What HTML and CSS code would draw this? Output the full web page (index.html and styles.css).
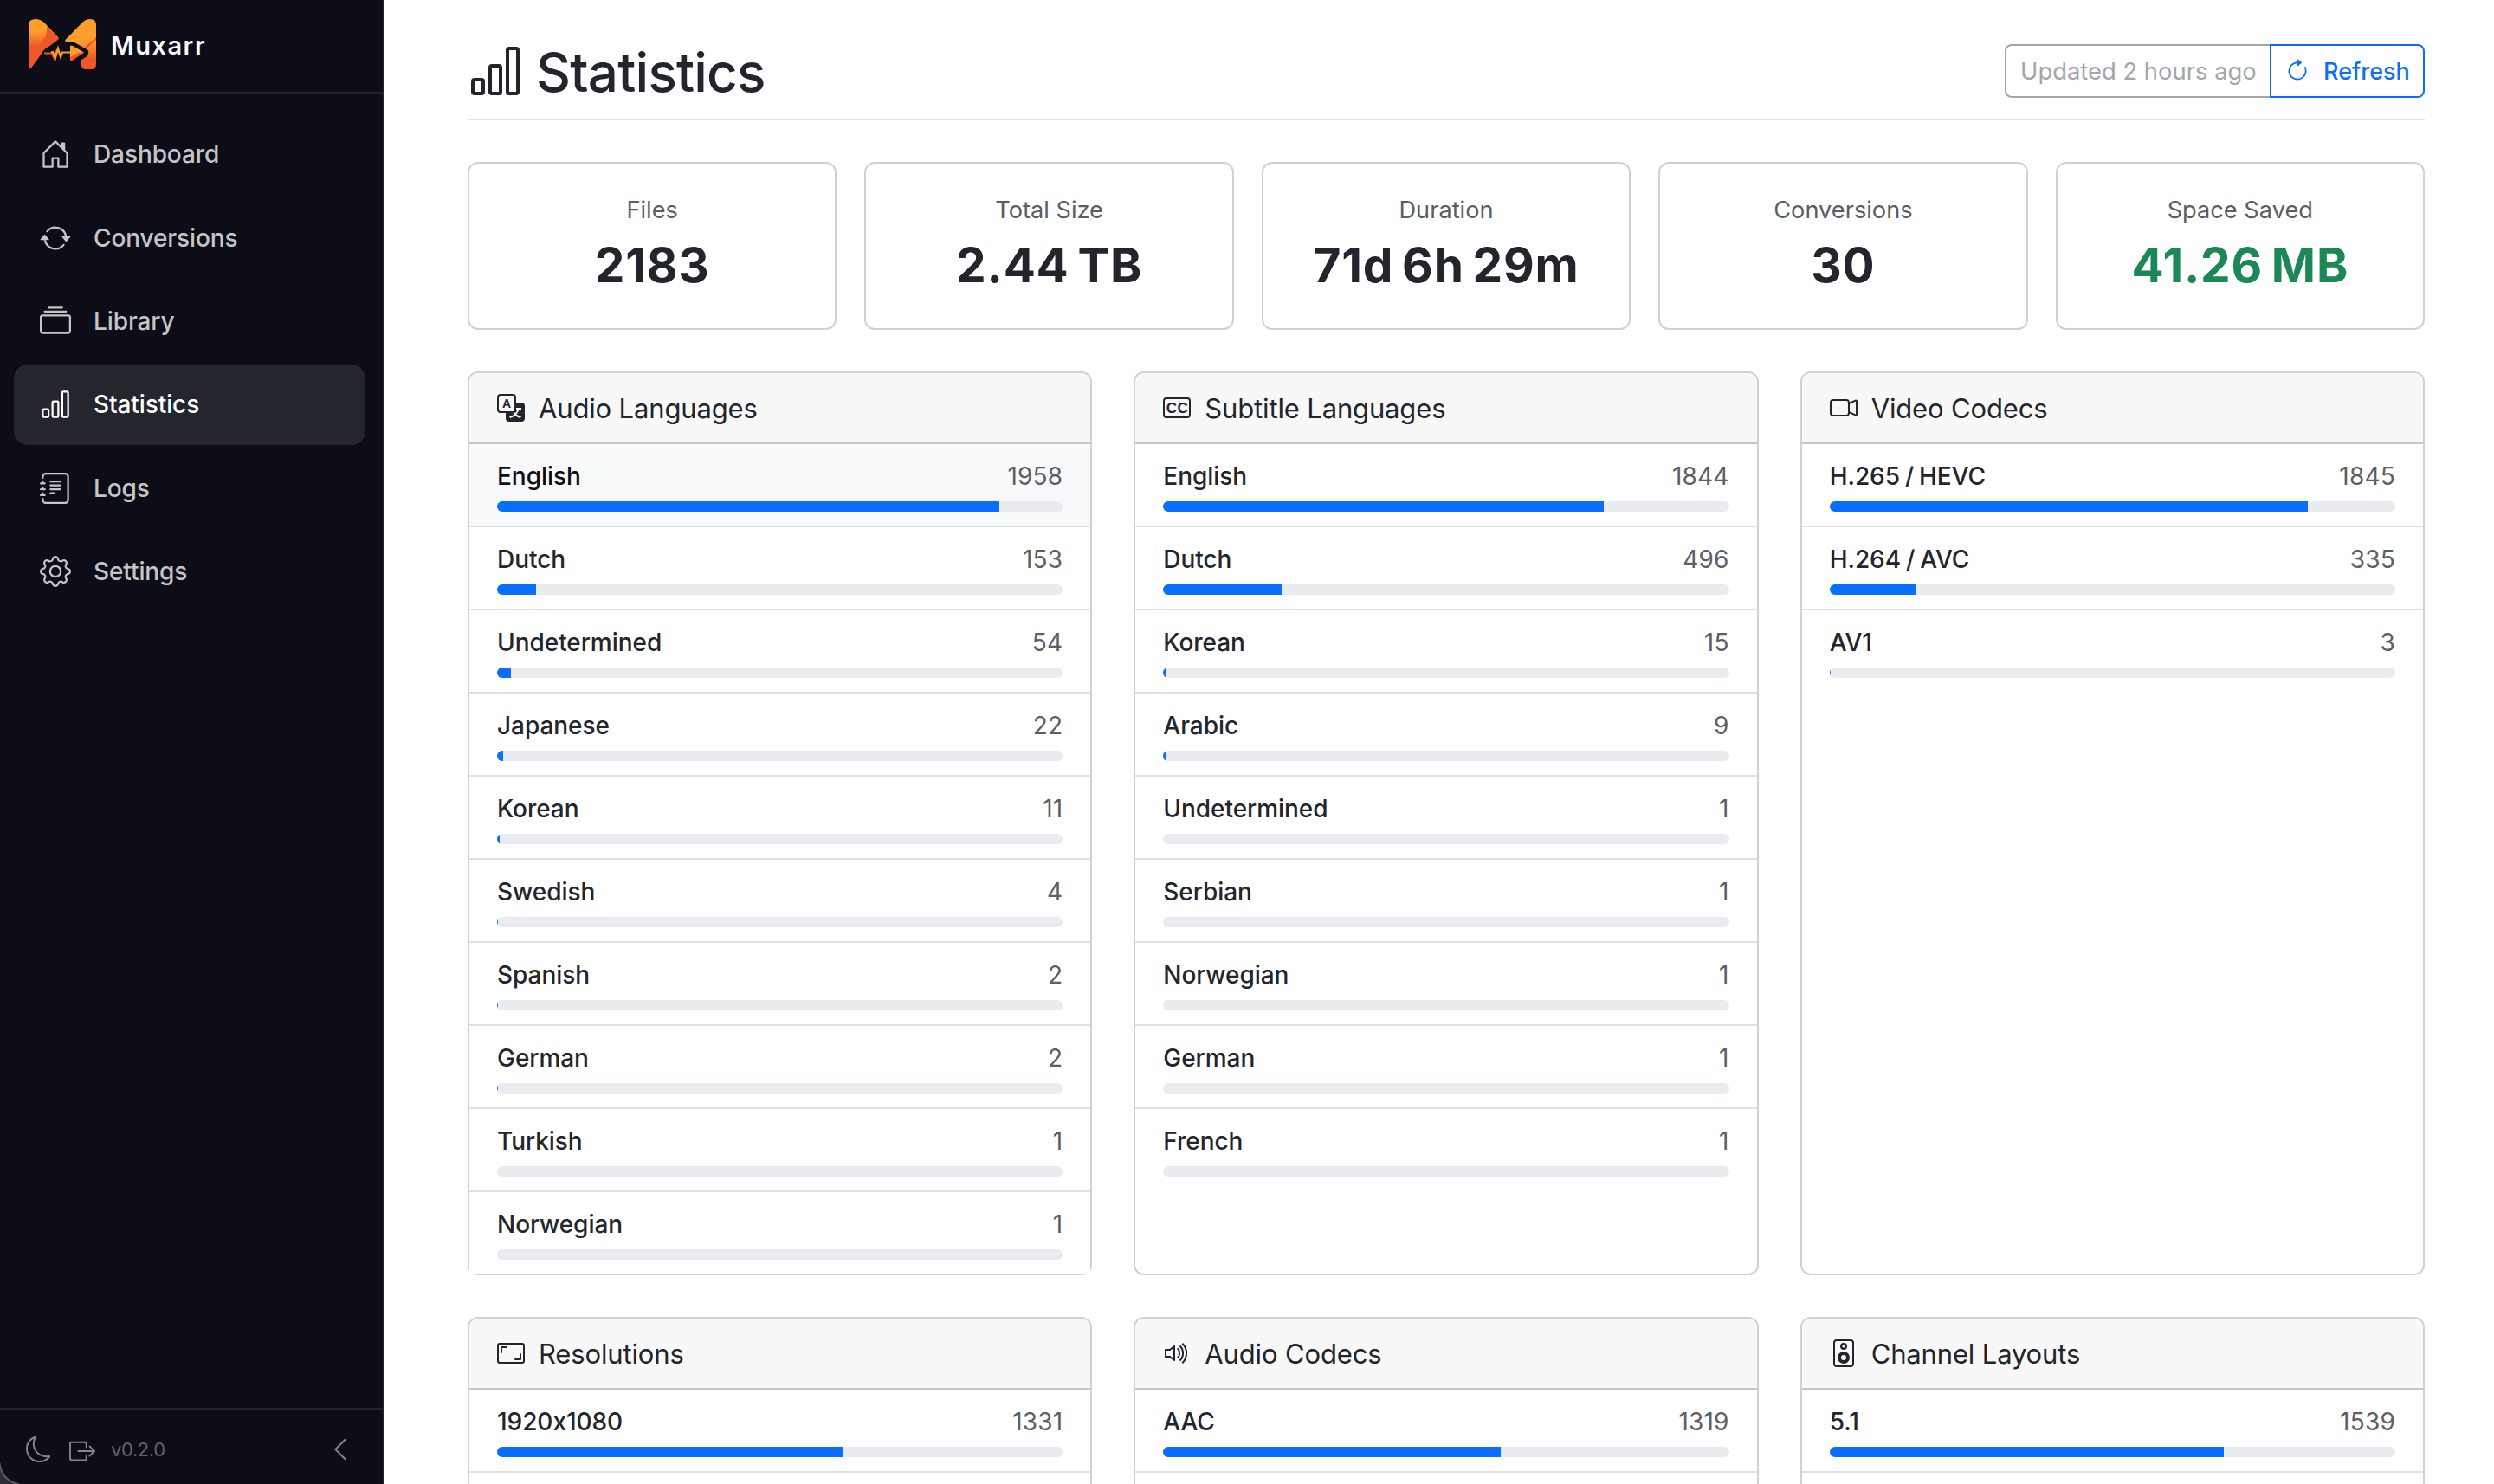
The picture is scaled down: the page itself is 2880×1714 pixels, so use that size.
FILE: index.html
```html
<!DOCTYPE html>
<html lang="en">
<head>
	<meta charset="utf-8">
	<title>Statistics - Muxarr</title>
	<link rel="stylesheet" href="styles.css">
</head>

<body>

<div class="sidebar">
	<div class="brand">
		<svg class="logo" viewBox="33 22 78 58">
			<defs>
				<linearGradient id="wing-left" x1="0" y1="0" x2="0" y2="1">
					<stop offset="0.25" stop-color="#fd9d2c"/>
					<stop offset="0.55" stop-color="#ef572a"/>
				</linearGradient>
				<linearGradient id="wing-right" x1="0" y1="0" x2="0" y2="1">
					<stop offset="0.45" stop-color="#fd9d2c"/>
					<stop offset="0.8" stop-color="#ef572a"/>
				</linearGradient>
			</defs>
			<path fill="url(#wing-left)" d="M33 29Q33 22 41 22Q47 22 52 27L67.500 43.500Q68 44.500 67 45.500L58 52.500Q50 57 48 62L36 78.500Q33 81 33 77Z"/>
			<path fill="#ef572a" d="M54 30L67.500 43.500Q68 44.500 67 45.500L58 52.500Q50 57 47 60Q43 52 50 46Q55 40 54 30Z"/>
			<path fill="url(#wing-right)" d="M75 46.500L95 26Q99 22 104 22Q111 22 111 29V74Q111 80 105 80H99Q94 80 94 75V69L100 65.500Q104 61 101 57.500L85 48.500Q82 47.500 76 48.500Z"/>
			<path fill="#ef572a" d="M98 54.500L111 43V46L100 56Z"/>
			<path fill="none" stroke="#ef572a" stroke-width="2.200" d="M51 61.500H60L63 68L66 57"/>
			<path fill="none" stroke="#fd9d2c" stroke-width="2.200" d="M59 60.500L61 60L64 67L67 56L70 66L72 60.500H82"/>
			<path fill="#fd9d2c" d="M81 53Q82 52 84 53L97 60.500L83 70Q81 70 81 68Z"/>
			<path fill="#ef572a" d="M97 60.500L83 70Q81 70 81 66L90 61Z"/>
		</svg>
		<span class="brand-name">Muxarr</span>
	</div>

	<ul class="nav">
		<li class="nav-item">
			<svg class="icon" viewBox="0 0 16 16"><path d="M8.354 1.146a.5.5 0 0 0-.708 0l-6 6A.5.5 0 0 0 1.500 7.500v7a.5.5 0 0 0 .5.5h4.500a.5.5 0 0 0 .5-.5v-4h2v4a.5.5 0 0 0 .5.5H14a.5.5 0 0 0 .5-.5v-7a.5.5 0 0 0-.146-.354L13 5.793V2.500a.5.5 0 0 0-.5-.5h-1a.5.5 0 0 0-.5.5v1.293zM2.500 14V7.707l5.500-5.500 5.500 5.500V14H10v-4a.5.5 0 0 0-.5-.5h-3a.5.5 0 0 0-.5.5v4z"/></svg>
			<span>Dashboard</span>
		</li>
		<li class="nav-item">
			<svg class="icon" viewBox="0 0 16 16"><path d="M11.534 7h3.932a.25.25 0 0 1 .192.41l-1.966 2.360a.25.25 0 0 1-.384 0l-1.966-2.360a.25.25 0 0 1 .192-.41m-11 2h3.932a.25.25 0 0 0 .192-.41L2.692 6.230a.25.25 0 0 0-.384 0L.342 8.590A.25.25 0 0 0 .534 9"/><path d="M8 3c-1.552 0-2.940.707-3.857 1.818a.5.5 0 1 1-.771-.636A6.002 6.002 0 0 1 13.917 7H12.900A5 5 0 0 0 8 3M3.100 9a5.002 5.002 0 0 0 8.757 2.182.5.5 0 1 1 .771.636A6.002 6.002 0 0 1 2.083 9z"/></svg>
			<span>Conversions</span>
		</li>
		<li class="nav-item">
			<svg class="icon" viewBox="0 0 16 16"><path d="M2.500 3.500a.5.5 0 0 1 0-1h11a.5.5 0 0 1 0 1zm2-2a.5.5 0 0 1 0-1h7a.5.5 0 0 1 0 1zM0 13a1.500 1.500 0 0 0 1.500 1.500h13A1.500 1.500 0 0 0 16 13V6a1.500 1.500 0 0 0-1.500-1.500h-13A1.500 1.500 0 0 0 0 6zm1.500.5A.5.5 0 0 1 1 13V6a.5.5 0 0 1 .5-.5h13a.5.5 0 0 1 .5.5v7a.5.5 0 0 1-.5.5z"/></svg>
			<span>Library</span>
		</li>
		<li class="nav-item active">
			<svg class="icon" viewBox="0 0 16 16"><path d="M4 11H2v3h2zm5-4H7v7h2zm5-5v12h-2V2zm-2-1a1 1 0 0 0-1 1v12a1 1 0 0 0 1 1h2a1 1 0 0 0 1-1V2a1 1 0 0 0-1-1zM6 7a1 1 0 0 1 1-1h2a1 1 0 0 1 1 1v7a1 1 0 0 1-1 1H7a1 1 0 0 1-1-1zm-5 4a1 1 0 0 1 1-1h2a1 1 0 0 1 1 1v3a1 1 0 0 1-1 1H2a1 1 0 0 1-1-1z"/></svg>
			<span>Statistics</span>
		</li>
		<li class="nav-item">
			<svg class="icon" viewBox="0 0 16 16"><path d="M5 10.500a.5.5 0 0 1 .5-.5h2a.5.5 0 0 1 0 1h-2a.5.5 0 0 1-.5-.5m0-2a.5.5 0 0 1 .5-.5h5a.5.5 0 0 1 0 1h-5a.5.5 0 0 1-.5-.5m0-2a.5.5 0 0 1 .5-.5h5a.5.5 0 0 1 0 1h-5a.5.5 0 0 1-.5-.5m0-2a.5.5 0 0 1 .5-.5h5a.5.5 0 0 1 0 1h-5a.5.5 0 0 1-.5-.5"/><path d="M3 0h10a2 2 0 0 1 2 2v12a2 2 0 0 1-2 2H3a2 2 0 0 1-2-2v-1h1v1a1 1 0 0 0 1 1h10a1 1 0 0 0 1-1V2a1 1 0 0 0-1-1H3a1 1 0 0 0-1 1v1H1V2a2 2 0 0 1 2-2"/><path d="M1 5v-.5a.5.5 0 0 1 1 0V5h.5a.5.5 0 0 1 0 1h-2a.5.5 0 0 1 0-1zm0 3v-.5a.5.5 0 0 1 1 0V8h.5a.5.5 0 0 1 0 1h-2a.5.5 0 0 1 0-1zm0 3v-.5a.5.5 0 0 1 1 0v.5h.5a.5.5 0 0 1 0 1h-2a.5.5 0 0 1 0-1z"/></svg>
			<span>Logs</span>
		</li>
		<li class="nav-item">
			<svg class="icon" viewBox="0 0 16 16"><path d="M8 4.754a3.246 3.246 0 1 0 0 6.492 3.246 3.246 0 0 0 0-6.492M5.754 8a2.246 2.246 0 1 1 4.492 0 2.246 2.246 0 0 1-4.492 0"/><path d="M9.796 1.343c-.527-1.790-3.065-1.790-3.592 0l-.094.319a.873.873 0 0 1-1.255.52l-.292-.16c-1.640-.892-3.433.902-2.540 2.541l.159.292a.873.873 0 0 1-.52 1.255l-.319.094c-1.790.527-1.790 3.065 0 3.592l.319.094a.873.873 0 0 1 .52 1.255l-.16.292c-.892 1.640.901 3.434 2.541 2.540l.292-.159a.873.873 0 0 1 1.255.52l.094.319c.527 1.790 3.065 1.790 3.592 0l.094-.319a.873.873 0 0 1 1.255-.52l.292.16c1.640.893 3.434-.902 2.540-2.541l-.159-.292a.873.873 0 0 1 .52-1.255l.319-.094c1.790-.527 1.790-3.065 0-3.592l-.319-.094a.873.873 0 0 1-.52-1.255l.16-.292c.893-1.640-.902-3.433-2.541-2.540l-.292.159a.873.873 0 0 1-1.255-.52zm-2.633.283c.246-.835 1.428-.835 1.674 0l.094.319a1.873 1.873 0 0 0 2.693 1.115l.291-.16c.764-.415 1.600.42 1.184 1.185l-.159.292a1.873 1.873 0 0 0 1.116 2.692l.318.094c.835.246.835 1.428 0 1.674l-.319.094a1.873 1.873 0 0 0-1.115 2.693l.16.291c.415.764-.42 1.600-1.185 1.184l-.291-.159a1.873 1.873 0 0 0-2.693 1.116l-.094.318c-.246.835-1.428.835-1.674 0l-.094-.319a1.873 1.873 0 0 0-2.692-1.115l-.292.16c-.764.415-1.600-.42-1.184-1.185l.159-.291A1.873 1.873 0 0 0 1.945 8.930l-.319-.094c-.835-.246-.835-1.428 0-1.674l.319-.094A1.873 1.873 0 0 0 3.060 4.377l-.16-.292c-.415-.764.42-1.600 1.185-1.184l.292.159a1.873 1.873 0 0 0 2.692-1.115z"/></svg>
			<span>Settings</span>
		</li>
	</ul>

	<div class="sidebar-footer">
		<svg class="icon" viewBox="0 0 16 16"><path d="M6 .278a.77.77 0 0 1 .08.858 7.200 7.200 0 0 0-.878 3.460c0 4.021 3.278 7.277 7.318 7.277q.792-.001 1.533-.16a.79.79 0 0 1 .81.316.73.73 0 0 1-.031.893A8.350 8.350 0 0 1 8.344 16C3.734 16 0 12.286 0 7.710 0 4.266 2.114 1.312 5.124.06A.75.75 0 0 1 6 .278M4.858 1.311A7.270 7.270 0 0 0 1.025 7.710c0 4.020 3.279 7.276 7.319 7.276a7.320 7.320 0 0 0 5.205-2.162q-.506.063-1.029.063c-4.610 0-8.343-3.714-8.343-8.290 0-1.167.242-2.278.681-3.286"/></svg>
		<svg class="icon logout" viewBox="0 0 16 16"><path d="M10 12.500a.5.5 0 0 1-.5.5h-8a.5.5 0 0 1-.5-.5v-9a.5.5 0 0 1 .5-.5h8a.5.5 0 0 1 .5.5v2a.5.5 0 0 0 1 0v-2A1.500 1.500 0 0 0 9.500 2h-8A1.500 1.500 0 0 0 0 3.500v9A1.500 1.500 0 0 0 1.500 14h8a1.500 1.500 0 0 0 1.500-1.500v-2a.5.5 0 0 0-1 0z"/><path d="M15.854 8.354a.5.5 0 0 0 0-.708l-3-3a.5.5 0 0 0-.708.708L14.293 7.500H5.500a.5.5 0 0 0 0 1h8.793l-2.147 2.146a.5.5 0 0 0 .708.708z"/></svg>
		<span class="version">v0.2.0</span>
		<svg class="icon collapse" viewBox="0 0 16 16"><path d="M11.354 1.646a.5.5 0 0 1 0 .708L5.707 8l5.647 5.646a.5.5 0 0 1-.708.708l-6-6a.5.5 0 0 1 0-.708l6-6a.5.5 0 0 1 .708 0"/></svg>
	</div>
	<div class="window-corner"></div>
</div>

<div class="main">
	<div class="page-header">
		<svg class="icon" viewBox="0 0 16 16"><path d="M4 11H2v3h2zm5-4H7v7h2zm5-5v12h-2V2zm-2-1a1 1 0 0 0-1 1v12a1 1 0 0 0 1 1h2a1 1 0 0 0 1-1V2a1 1 0 0 0-1-1zM6 7a1 1 0 0 1 1-1h2a1 1 0 0 1 1 1v7a1 1 0 0 1-1 1H7a1 1 0 0 1-1-1zm-5 4a1 1 0 0 1 1-1h2a1 1 0 0 1 1 1v3a1 1 0 0 1-1 1H2a1 1 0 0 1-1-1z"/></svg>
		<h1>Statistics</h1>
		<div class="btn-group">
			<button class="btn btn-updated" disabled>Updated 2 hours ago</button>
			<button class="btn btn-refresh">
				<svg class="icon" viewBox="0 0 16 16"><path d="M8 3a5 5 0 1 0 4.546 2.914.5.5 0 0 1 .908-.417A6 6 0 1 1 8 2z"/><path d="M8 4.466V.534a.25.25 0 0 1 .41-.192l2.360 1.966c.12.1.12.284 0 .384L8.410 4.658A.25.25 0 0 1 8 4.466"/></svg>
				<span>Refresh</span>
			</button>
		</div>
	</div>

	<div class="totals">
		<div class="total"><div class="label">Files</div><div class="value">2183</div></div>
		<div class="total"><div class="label">Total Size</div><div class="value">2.44 TB</div></div>
		<div class="total"><div class="label">Duration</div><div class="value">71d 6h 29m</div></div>
		<div class="total"><div class="label">Conversions</div><div class="value">30</div></div>
		<div class="total"><div class="label">Space Saved</div><div class="value saved">41.26 MB</div></div>
	</div>

	<div class="cards">
		<div class="card">
			<div class="card-header">
				<svg class="icon" viewBox="0 0 16 16"><path d="M0 2a2 2 0 0 1 2-2h7a2 2 0 0 1 2 2v3h3a2 2 0 0 1 2 2v7a2 2 0 0 1-2 2H7a2 2 0 0 1-2-2v-3H2a2 2 0 0 1-2-2zm2-1a1 1 0 0 0-1 1v7a1 1 0 0 0 1 1h7a1 1 0 0 0 1-1V2a1 1 0 0 0-1-1zm7.138 9.995q.289.451.63.846c-.748.575-1.673 1.001-2.768 1.292.178.217.451.635.555.867 1.125-.359 2.080-.844 2.886-1.494.777.665 1.739 1.165 2.930 1.472.133-.254.414-.673.629-.89-1.125-.253-2.057-.694-2.820-1.284.681-.747 1.222-1.651 1.621-2.757H14V8h-3v1.047h.765c-.318.844-.74 1.546-1.272 2.130a6 6 0 0 1-.415-.492 2 2 0 0 1-.94.31"/><text class="glyph-a" x="5.500" y="8">A</text></svg>
				<span>Audio Languages</span>
			</div>
			<div class="rows" id="audio-languages"></div>
		</div>
		<div class="card">
			<div class="card-header">
				<svg class="icon" viewBox="0 0 16 16"><path d="M14 3a1 1 0 0 1 1 1v8a1 1 0 0 1-1 1H2a1 1 0 0 1-1-1V4a1 1 0 0 1 1-1zM2 2a2 2 0 0 0-2 2v8a2 2 0 0 0 2 2h12a2 2 0 0 0 2-2V4a2 2 0 0 0-2-2z"/><text class="glyph-cc" x="8.200" y="11">CC</text></svg>
				<span>Subtitle Languages</span>
			</div>
			<div class="rows" id="subtitle-languages"></div>
		</div>
		<div class="card">
			<div class="card-header">
				<svg class="icon" viewBox="0 0 16 16"><path fill-rule="evenodd" d="M0 5a2 2 0 0 1 2-2h7.500a2 2 0 0 1 1.983 1.738l3.110-1.382A1 1 0 0 1 16 4.269v7.462a1 1 0 0 1-1.406.913l-3.111-1.382A2 2 0 0 1 9.500 13H2a2 2 0 0 1-2-2zm11.500 5.175 3.500 1.556V4.269l-3.500 1.556zM2 4a1 1 0 0 0-1 1v6a1 1 0 0 0 1 1h7.500a1 1 0 0 0 1-1V5a1 1 0 0 0-1-1z"/></svg>
				<span>Video Codecs</span>
			</div>
			<div class="rows" id="video-codecs"></div>
		</div>
		<div class="card">
			<div class="card-header">
				<svg class="icon" viewBox="0 0 16 16"><path d="M0 3.500A1.500 1.500 0 0 1 1.500 2h13A1.500 1.500 0 0 1 16 3.500v9a1.500 1.500 0 0 1-1.500 1.500h-13A1.500 1.500 0 0 1 0 12.500zM1.500 3a.5.5 0 0 0-.5.5v9a.5.5 0 0 0 .5.5h13a.5.5 0 0 0 .5-.5v-9a.5.5 0 0 0-.5-.5z"/><path d="M2 4.500a.5.5 0 0 1 .5-.5h3a.5.5 0 0 1 0 1H3v2.500a.5.5 0 0 1-1 0zm12 7a.5.5 0 0 1-.5.5h-3a.5.5 0 0 1 0-1H13V8.500a.5.5 0 0 1 1 0z"/></svg>
				<span>Resolutions</span>
			</div>
			<div class="rows" id="resolutions"></div>
		</div>
		<div class="card">
			<div class="card-header">
				<svg class="icon" viewBox="0 0 16 16"><path d="M11.536 14.010A8.470 8.470 0 0 0 14.026 8a8.470 8.470 0 0 0-2.490-6.010l-.708.707A7.480 7.480 0 0 1 13.025 8c0 2.071-.84 3.946-2.197 5.303z"/><path d="M10.121 12.596A6.480 6.480 0 0 0 12.025 8a6.480 6.480 0 0 0-1.904-4.596l-.707.707A5.480 5.480 0 0 1 11.025 8a5.480 5.480 0 0 1-1.610 3.890z"/><path d="M10.025 8a4.500 4.500 0 0 1-1.318 3.182L8 10.475A3.500 3.500 0 0 0 9.025 8c0-.966-.392-1.841-1.025-2.475l.707-.707A4.500 4.500 0 0 1 10.025 8M7 4a.5.5 0 0 0-.812-.39L3.825 5.500H1.500A.5.5 0 0 0 1 6v4a.5.5 0 0 0 .5.5h2.325l2.363 1.890A.5.5 0 0 0 7 12zM4.312 6.390 6 5.040v5.920L4.312 9.610A.5.5 0 0 0 4 9.500H2v-3h2a.5.5 0 0 0 .312-.11"/></svg>
				<span>Audio Codecs</span>
			</div>
			<div class="rows" id="audio-codecs"></div>
		</div>
		<div class="card">
			<div class="card-header">
				<svg class="icon" viewBox="0 0 16 16"><path d="M12 1a1 1 0 0 1 1 1v12a1 1 0 0 1-1 1H4a1 1 0 0 1-1-1V2a1 1 0 0 1 1-1zM4 0a2 2 0 0 0-2 2v12a2 2 0 0 0 2 2h8a2 2 0 0 0 2-2V2a2 2 0 0 0-2-2z"/><path d="M8 4.750a.75.75 0 1 1 0-1.500.75.75 0 0 1 0 1.500M8 6a2 2 0 1 0 0-4 2 2 0 0 0 0 4m0 3a1.500 1.500 0 1 0 0 3 1.500 1.500 0 0 0 0-3m-3.500 1.500a3.500 3.500 0 1 1 7 0 3.500 3.500 0 0 1-7 0"/></svg>
				<span>Channel Layouts</span>
			</div>
			<div class="rows" id="channel-layouts"></div>
		</div>
	</div>
</div>

<script type="text/javascript">
	// name, count pairs; total is what the bars are measured against
	fillCard('audio-languages', 2208, [['English', 1958], ['Dutch', 153], ['Undetermined', 54], ['Japanese', 22],
		['Korean', 11], ['Swedish', 4], ['Spanish', 2], ['German', 2], ['Turkish', 1], ['Norwegian', 1]]);
	fillCard('subtitle-languages', 2369, [['English', 1844], ['Dutch', 496], ['Korean', 15], ['Arabic', 9],
		['Undetermined', 1], ['Serbian', 1], ['Norwegian', 1], ['German', 1], ['French', 1]]);
	fillCard('video-codecs', 2183, [['H.265 / HEVC', 1845], ['H.264 / AVC', 335], ['AV1', 3]]);
	fillCard('resolutions', 2183, [['1920x1080', 1331]]);
	fillCard('audio-codecs', 2208, [['AAC', 1319]]);
	fillCard('channel-layouts', 2208, [['5.1', 1539]]);

	// the first language is highlighted
	document.querySelector('#audio-languages .row').className += ' hover';

	function fillCard(id, total, items) {
		var html = '';
		for (var i = 0; i < items.length; i++) {
			var percent = (items[i][1] / total * 100).toFixed(1);
			html += '<div class="row"><div class="row-text"><span class="name">' + items[i][0] + '</span>' +
				'<span class="count">' + items[i][1] + '</span></div>' +
				'<div class="progress"><div class="bar" style="width: ' + percent + '%"></div></div></div>';
		}
		document.getElementById(id).innerHTML = html;
	}
</script>

</body>
</html>
```

FILE: styles.css
```css
* {box-sizing: border-box;}
body {display: flex; height: 1714px; margin: 0; overflow: hidden; background: #fff; color: #22252b; font-family: Inter, "Liberation Sans", sans-serif; font-size: 28px; line-height: 42px; font-feature-settings: "calt" 0;}
.icon {display: block; flex: none; width: 32px; height: 32px; fill: currentColor;}

/* sidebar */
.sidebar {position: relative; display: flex; flex-direction: column; flex: none; width: 444px; height: 1714px; background: #0d0d17; border-right: 2px solid #25262e; color: #c5c5c7;}
.brand {display: flex; align-items: flex-start; gap: 17px; height: 108px; padding: 22px 0 0 33px; border-bottom: 2px solid #23242c;}
.logo {display: block; width: 78px; height: 58px;}
.brand-name {padding-top: 10px; color: #f8f9fb; font-size: 29px; font-weight: 600; letter-spacing: 1.5px;}
.nav {display: flex; flex-direction: column; gap: 4px; flex: 1; list-style: none; margin: 0; padding: 24px 20px 0 16px;}
.nav-item {display: flex; align-items: center; gap: 26px; height: 92.400px; padding-left: 30px; border-radius: 16px; font-weight: 500; letter-spacing: -0.1px;}
.nav-item .icon {width: 36px; height: 36px;}
.nav-item.active {background: #23262c; color: #fff;}
.sidebar-footer {display: flex; align-items: center; height: 88px; padding: 6px 34px 0 30px; border-top: 2px solid #23242c; color: #85858b;}
.sidebar-footer .icon {width: 30px; height: 30px;}
.sidebar-footer .logout {margin: 4px 18px 0 20px;}
.version {color: #626268; font-size: 22px; letter-spacing: -0.4px;}
.sidebar-footer .collapse {margin-left: auto;}
.window-corner {position: absolute; left: 0; bottom: 0; width: 22px; height: 24px; background: radial-gradient(circle at 26px -2px, transparent 25px, #5a5a60 26px, #5a5a60 27px, #2e2e34 28px);}

/* page */
.main {flex: 1; padding: 44px 80px 0 96px;}
.page-header {display: flex; align-items: center; height: 95px; padding-bottom: 17px; border-bottom: 2px solid #dee2e6;}
.page-header > .icon {width: 64px; height: 64px;}
h1 {margin: 0 auto 0 15px; padding-top: 3px; font-size: 62px; font-weight: 500; line-height: 74px; letter-spacing: -0.8px;}
.btn-group {display: flex;}
.btn {display: flex; align-items: center; height: 62px; padding: 0 16px; border: 2px solid; background: none; font-family: inherit; font-size: 27.400px; white-space: nowrap;}
.btn-updated {width: 308px; border-color: #a2a6aa; border-radius: 8px 0 0 8px; color: #a2a6aa;}
.btn-refresh {width: 179px; margin-left: -2px; gap: 16px; border-color: #0a6eff; border-radius: 0 8px 8px 0; color: #0a6eff; font-size: 27px; font-weight: 500;}
.btn-refresh .icon {width: 28px; height: 28px;}

.totals {display: grid; grid-template-columns: repeat(5, 1fr); gap: 32px; margin-top: 48px;}
.total {height: 194px; padding-top: 33px; border: 2px solid #d1d1d2; border-radius: 12px; text-align: center;}
.label {color: #5a5d62; font-size: 27.200px; line-height: 42px;}
.value {margin-top: 9px; font-size: 55px; font-weight: 700; line-height: 67px; letter-spacing: 0.8px; word-spacing: -4px;}
.saved {color: #1b8856;}

/* breakdown cards */
.cards {display: grid; grid-template-columns: repeat(3, 1fr); gap: 48px; margin-top: 48px;}
.card {min-height: 400px; border: 2px solid #d1d1d2; border-radius: 12px;}
.card-header {display: flex; align-items: center; gap: 16px; height: 82px; padding-left: 32px; border-bottom: 2px solid #c6c6c6; border-radius: 10px 10px 0 0; background: #f8f8f8; font-size: 31px; letter-spacing: -0.15px;}
.card-header span {padding-top: 1px; line-height: 49px;}
.row {padding: 16px 32px; border-bottom: 2px solid #dee2e6; background: #fff;}
.row.hover {background: #f8f9fb;}
.row.hover .name {color: #0d0d17;}
#audio-languages .row:last-child {border-bottom: 0;}
#subtitle-languages .row:last-child, #video-codecs .row:last-child {border-bottom: 0;}
.row-text {display: flex; justify-content: space-between; margin-bottom: 8px;}
.name {font-weight: 500; letter-spacing: -0.05px; word-spacing: -1.5px;}
.count {color: #5c5f63; letter-spacing: 0.2px;}
.progress {height: 12px; border-radius: 6px; overflow: hidden; background: #eaebef;}
.bar {height: 12px; background: #0a6eff;}
.glyph-a {font: bold 7px "Liberation Sans", sans-serif; text-anchor: middle;}
.glyph-cc {font: bold 8.500px "Liberation Sans Narrow", "Liberation Sans", sans-serif; text-anchor: middle; letter-spacing: 0.2px;}
```
